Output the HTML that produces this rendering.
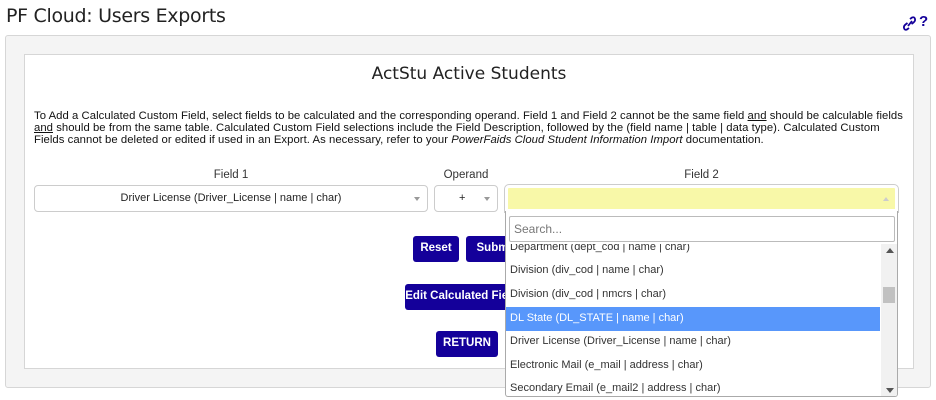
<!DOCTYPE html>
<html><head><style>
*{box-sizing:border-box;margin:0;padding:0}
body{width:936px;height:400px;background:#fff;font-family:"Liberation Sans",Arial,sans-serif;position:relative;overflow:hidden;color:#222}
.a{position:absolute}
.h1{left:6px;top:5px;font-size:19px;color:#222;font-family:"DejaVu Sans","Liberation Sans",sans-serif;letter-spacing:-0.3px}
.outer{left:5px;top:35px;width:926px;height:353px;background:#f4f4f4;border:1px solid #d6d6d6;border-radius:3px}
.inner{left:24px;top:54px;width:890px;height:315px;background:#fff;border:1px solid #d6d6d6}
.title{left:24px;width:890px;top:64px;text-align:center;font-size:17px;font-family:"DejaVu Sans","Liberation Sans",sans-serif;color:#222}
.p{left:34px;top:110px;width:874px;font-size:11.3px;line-height:12px;font-weight:normal;color:#111;letter-spacing:0.05px}
.p u{text-decoration:underline}
.lbl{font-size:11.5px;color:#333;top:169px;text-align:center}
.sel{background:#fff;border:1px solid #ccc;border-radius:4px;height:27px;font-size:11px;line-height:25px;text-align:center;color:#222}
.car{position:absolute;right:7px;top:11px;width:0;height:0;border-left:3px solid transparent;border-right:3px solid transparent;border-top:4px solid #999}
.btn{background:#14009a;color:#fff;font-size:11.5px;font-weight:bold;border-radius:3px;text-align:center;line-height:25px;height:26px;white-space:nowrap;overflow:hidden}
.dd{left:505px;top:211px;width:393px;height:186px;background:#fff;border:1px solid #aaa;border-top:none;border-radius:0 0 3px 3px;overflow:hidden}
.it{position:absolute;left:0;width:374px;height:23.5px;font-size:11px;line-height:23.5px;padding-left:4px;color:#333}
</style></head><body>
<div class="a h1">PF Cloud: Users Exports</div>
<svg class="a" style="left:903px;top:16px" width="14" height="15" viewBox="0 0 14 15"><g fill="none" stroke="#14009a" stroke-width="1.8"><path d="M7 3 L9 1.5 Q11.5 0.5 12 3 Q12.5 5 10.5 6.5 L8.5 8"/><path d="M6 12 L4 13.5 Q1.5 14.5 1 12 Q0.5 10 2.5 8.5 L4.5 7"/><path d="M5 10 L9 5"/></g></svg>
<div class="a" style="left:919px;top:13px;font-size:15px;font-weight:bold;color:#14009a">?</div>
<div class="a outer"></div>
<div class="a inner"></div>
<div class="a title">ActStu Active Students</div>
<div class="a p">To Add a Calculated Custom Field, select fields to be calculated and the corresponding operand. Field 1 and Field 2 cannot be the same field <u>and</u> should be calculable fields <u>and</u> should be from the same table. Calculated Custom Field selections include the Field Description, followed by the (field name | table | data type). Calculated Custom Fields cannot be deleted or edited if used in an Export. As necessary, refer to your <i>PowerFaids Cloud Student Information Import</i> documentation.</div>
<div class="a lbl" style="left:34px;width:394px">Field 1</div>
<div class="a lbl" style="left:434px;width:64px">Operand</div>
<div class="a lbl" style="left:505px;width:393px">Field 2</div>
<div class="a sel" style="left:34px;top:185px;width:394px">Driver License (Driver_License | name | char)<span class="car"></span></div>
<div class="a sel" style="left:434px;top:185px;width:64px;text-align:left;padding-left:24px">+<span class="car"></span></div>
<div class="a sel" style="left:505px;top:185px;width:393px;border-radius:4px 4px 0 0;background:#f8f8a8;border:3px solid #fff;outline:1px solid #ccc"><span style="position:absolute;right:6px;top:9px;border-left:3px solid transparent;border-right:3px solid transparent;border-bottom:4px solid #ccc"></span></div>
<div class="a btn" style="left:413px;top:236px;width:46px">Reset</div>
<div class="a btn" style="left:466px;top:236px;width:60px">Submit</div>
<div class="a btn" style="left:405px;top:284px;width:120px">Edit Calculated Fields</div>
<div class="a btn" style="left:436px;top:331px;width:62px">RETURN</div>
<div class="a dd">
<div class="a" style="left:3px;top:5px;width:386px;height:26px;border:1px solid #bbb;border-radius:2px;font-size:12px;line-height:24px;padding-left:4px;color:#777;background:#fff">Search...</div>
<div class="it" style="top:25px;clip-path:inset(8px 0 0 0)">Department (dept_cod | name | char)</div>
<div class="it" style="top:48px">Division (div_cod | name | char)</div>
<div class="it" style="top:72px">Division (div_cod | nmcrs | char)</div>
<div class="it" style="top:96px;background:#5897fb;color:#fff">DL State (DL_STATE | name | char)</div>
<div class="it" style="top:119px">Driver License (Driver_License | name | char)</div>
<div class="it" style="top:143px">Electronic Mail (e_mail | address | char)</div>
<div class="it" style="top:166px">Secondary Email (e_mail2 | address | char)</div>
<div class="a" style="left:375px;top:33px;width:17px;height:153px;background:#f1f1f1"></div>
<div class="a" style="left:380px;top:37px;border-left:4px solid transparent;border-right:4px solid transparent;border-bottom:5px solid #555"></div>
<div class="a" style="left:380px;top:177px;border-left:4px solid transparent;border-right:4px solid transparent;border-top:5px solid #555"></div>
<div class="a" style="left:377px;top:76px;width:12px;height:16px;background:#c1c1c1"></div>
</div>
</body></html>
